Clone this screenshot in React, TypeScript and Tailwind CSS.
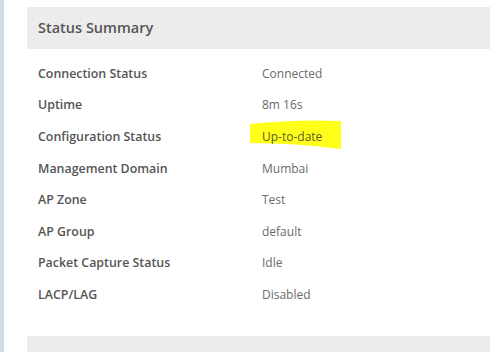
const rows = [
  { label: "Connection Status", value: "Connected" },
  { label: "Uptime", value: "8m 16s" },
  { label: "Configuration Status", value: "Up-to-date", marked: true },
  { label: "Management Domain", value: "Mumbai" },
  { label: "AP Zone", value: "Test" },
  { label: "AP Group", value: "default" },
  { label: "Packet Capture Status", value: "Idle" },
  { label: "LACP/LAG", value: "Disabled" },
];

function Marker() {
  // yellow highlighter stroke behind the value
  return (
    <svg
      className="absolute left-[-12px] top-[-9px] pointer-events-none"
      width="92"
      height="30"
      viewBox="0 0 92 30"
    >
      <path d="M0,4 Q46,-1 91,1 L91,29 Q46,23 0,23 Z" fill="#ffff1a" />
    </svg>
  );
}

export default function App() {
  return (
    <div className="flex h-[352px] w-[490px] overflow-hidden bg-white font-['Open_Sans','Noto_Sans',sans-serif]">
      <div className="w-[4px] shrink-0 bg-[#d2dbe4]" />
      <div className="flex-1 pl-[23px] pt-[7px]">
        <div className="flex h-[42px] items-center bg-[#ececec] px-[11px] text-[14.5px] font-semibold text-[#555]">
          Status Summary
        </div>
        <div className="pt-[9px] pb-[25px]">
          {rows.map((r) => (
            <div key={r.label} className="flex h-[31.6px] items-center px-[11px] text-[12px] leading-[16px]">
              <div className="w-[224px] text-[12.4px] font-semibold text-[#555]">{r.label}</div>
              <div className="relative text-[#6b6b6b]">
                {r.marked && <Marker />}
                <span className={r.marked ? "relative text-[#5b5b20]" : ""}>{r.value}</span>
              </div>
            </div>
          ))}
        </div>
        <div className="flex h-[42px] items-start bg-[#ececec] px-[11px] pt-[12px] text-[14.5px] font-semibold leading-[18px] text-[#555]">
          WLANs
        </div>
      </div>
    </div>
  );
}
